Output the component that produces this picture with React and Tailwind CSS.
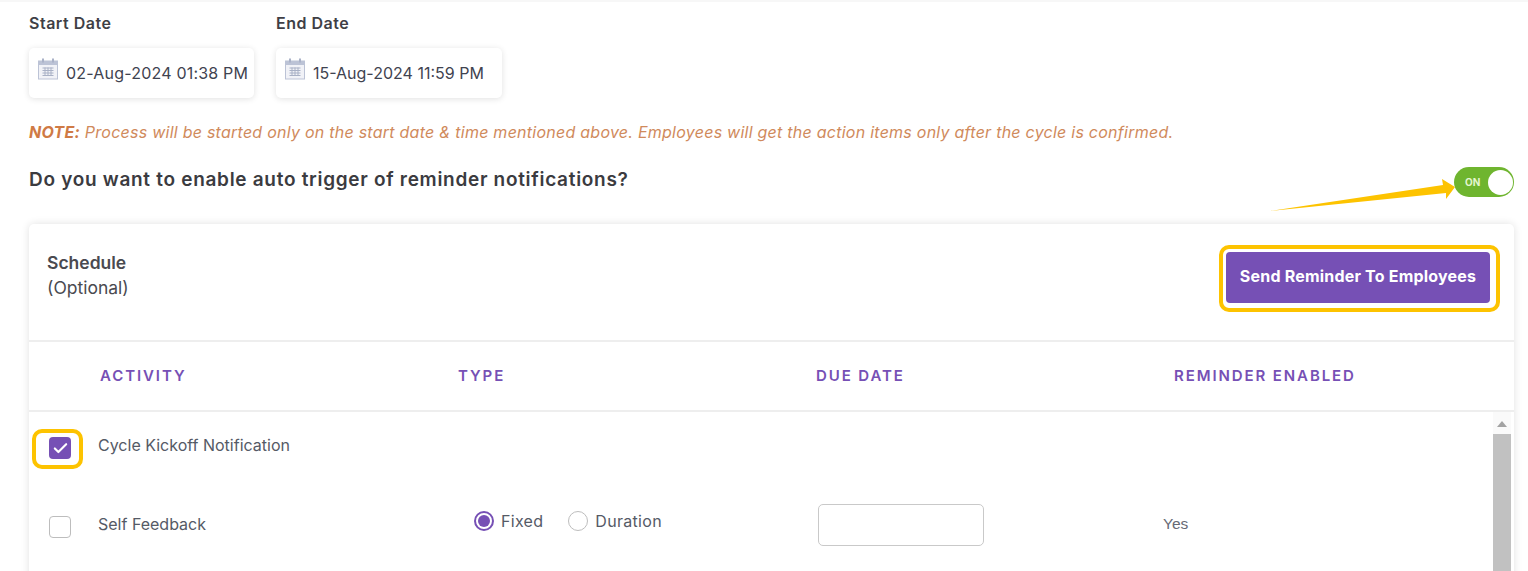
import { Check } from 'lucide-react';

const font = { fontFamily: 'Inter, "Noto Sans", sans-serif' };

function CalendarIcon() {
  return (
    <svg width="20" height="22" viewBox="0 0 20 22" className="shrink-0 -mt-[9px] text-[#bcc3d6]">
      <rect x="0.5" y="3" width="19" height="18" fill="#f1f2f7" stroke="currentColor" />
      <rect x="0.5" y="3" width="19" height="4" fill="currentColor" />
      <rect x="4" y="0.5" width="2" height="4" fill="#aab2c8" />
      <rect x="14" y="0.5" width="2" height="4" fill="#aab2c8" />
      <path d="M4.5 10h11M4.5 12.5h11M4.5 15h11M4.5 17.5h11M7 9.5v8.5M10 9.5v8.5M13 9.5v8.5" stroke="#a9b1c6" strokeWidth="1" fill="none" />
    </svg>
  );
}

function DateBox({ label, value, width, tracking }) {
  return (
    <div className="flex flex-col">
      <div className="text-[16px] leading-5 font-semibold tracking-[0.5px] text-[#3f3f46] h-[35px]">{label}</div>
      <div className={`${width} h-[50px] bg-white rounded-[5px] shadow-[0_1px_6px_rgba(0,0,0,0.12)] flex items-center gap-2 pl-[9px] text-[16px] text-[#3f4350] whitespace-nowrap`}>
        <CalendarIcon />
        <span className={tracking}>{value}</span>
      </div>
    </div>
  );
}

function Radio({ checked, label }) {
  return (
    <label className="flex items-center gap-[7px] text-[16px] tracking-[0.3px] text-[#555a66]">
      {checked ? (
        <span className="w-5 h-5 rounded-full border-2 border-[#7650b5] flex items-center justify-center">
          <span className="w-3 h-3 rounded-full bg-[#7650b5]" />
        </span>
      ) : (
        <span className="w-5 h-5 rounded-full border border-[#bdbdbd]" />
      )}
      {label}
    </label>
  );
}

const headers = ['ACTIVITY', 'TYPE', 'DUE DATE', 'REMINDER ENABLED'];

export default function App() {
  return (
    <div style={font} className="relative h-[571px] overflow-hidden bg-white pl-[29px] pr-[14px] pt-[11px] border-t-2 border-[#f7f7f7]">
      <div className="flex gap-[22px]">
        <DateBox label="Start Date" value="02-Aug-2024 01:38 PM" width="w-[225px]" tracking="tracking-[0.2px]" />
        <DateBox label="End Date" value="15-Aug-2024 11:59 PM" width="w-[226px]" tracking="tracking-[0px]" />
      </div>

      <p className="mt-[24px] text-[16px] leading-5 italic text-[#d08a5c] tracking-[0.25px] whitespace-nowrap">
        <b className="font-bold text-[#cf7a45]">NOTE:</b> Process will be started only on the start date &amp; time mentioned above. Employees will get the action items only after the cycle is confirmed.
      </p>

      <div className="mt-[25px] h-[30px] flex items-center justify-between">
        <div className="text-[19px] font-semibold text-[#3b3b40] -mt-[4px] tracking-[0.7px]">Do you want to enable auto trigger of reminder notifications?</div>
        <div className="w-[60px] h-[30px] rounded-full bg-[#6fb52f] flex items-center justify-between pl-[11px] pr-[1px]">
          <span className="text-[10px] font-bold text-[#e4f5d0]">ON</span>
          <span className="w-[25px] h-[25px] rounded-full bg-white" />
        </div>
      </div>

      {/* annotation arrow */}
      <svg className="absolute left-[1270px] top-[172px]" width="190" height="40" viewBox="0 0 190 40">
        <polygon points="0,37 173,11 172,5 185,13 176,25 176,19" fill="#fdc300" />
      </svg>

      <div className="mt-[27px] bg-white rounded-[5px] shadow-[0_0_8px_rgba(0,0,0,0.12)] h-[400px]">
        <div className="h-[118px] flex items-center justify-between border-b-2 border-[#eeeeee] pl-[18px] pr-[14px]">
          <div className="text-[17.5px] leading-[25px] text-[#4a4a50] -mt-[15px]">
            <div className="font-semibold">Schedule</div>
            <div>(Optional)</div>
          </div>
          <div className="border-[4px] border-[#fdc300] rounded-[10px] pl-[3px] pr-[6px] pt-[3px] pb-[5px] -mt-[7px]">
            <button className="block w-[264px] h-[51px] pb-[4px] rounded-[4px] bg-[#7650b5] text-white text-[16px] font-bold whitespace-nowrap tracking-[0.2px]">
              Send Reminder To Employees
            </button>
          </div>
        </div>

        <div className="h-[70px] flex items-center pl-[71px] border-b-2 border-[#eeeeee]">
          {headers.map((h) => (
            <div key={h} className="w-[358px] shrink-0 whitespace-nowrap text-[15px] font-semibold tracking-[1.9px] text-[#7650b5] last:w-auto">{h}</div>
          ))}
        </div>

        <div className="relative flex">
          <div className="flex-1 pl-[20px] pt-[19px]">
            <div className="flex items-start h-[73px]">
              <div className="relative w-[22px] h-[22px] rounded-[4px] bg-[#7650b5] flex items-center justify-center mt-[6px]">
                <Check size={17} strokeWidth={3} className="text-white" />
                <span className="absolute -left-[17px] -right-[12px] -top-[8px] -bottom-[10px] border-[4px] border-[#fdc300] rounded-[10px]" />
              </div>
              <div className="ml-[27px] mt-[4px] text-[16px] leading-5 text-[#555a66]">Cycle Kickoff Notification</div>
            </div>
            <div className="flex items-center h-[42px]">
              <div className="w-[22px] h-[22px] rounded-[4px] border border-[#bdbdbd] bg-white mt-[4px]" />
              <div className="ml-[27px] w-[376px] text-[16px] text-[#555a66] -mt-[2px]">Self Feedback</div>
              <div className="flex gap-[25px] w-[344px] -mt-[8px]">
                <Radio checked label="Fixed" />
                <Radio label="Duration" />
              </div>
              <input className="w-[166px] h-[42px] rounded-[5px] border border-[#c9c9c9] bg-white" />
              <div className="ml-[179px] -mt-[2px] text-[15.5px] text-[#666a75]" style={{ fontFamily: '"Liberation Sans", sans-serif' }}>Yes</div>
            </div>
          </div>
          <div className="w-[18px] mr-[3px] flex flex-col items-center bg-[#fafafa] h-[160px]">
            <svg width="10" height="6" viewBox="0 0 10 6" className="mt-[9px]"><polygon points="5,0 10,6 0,6" fill="#a3a3a3" /></svg>
            <div className="mt-[7px] w-full flex-1 bg-[#c1c1c1]" />
          </div>
        </div>
      </div>
    </div>
  );
}
